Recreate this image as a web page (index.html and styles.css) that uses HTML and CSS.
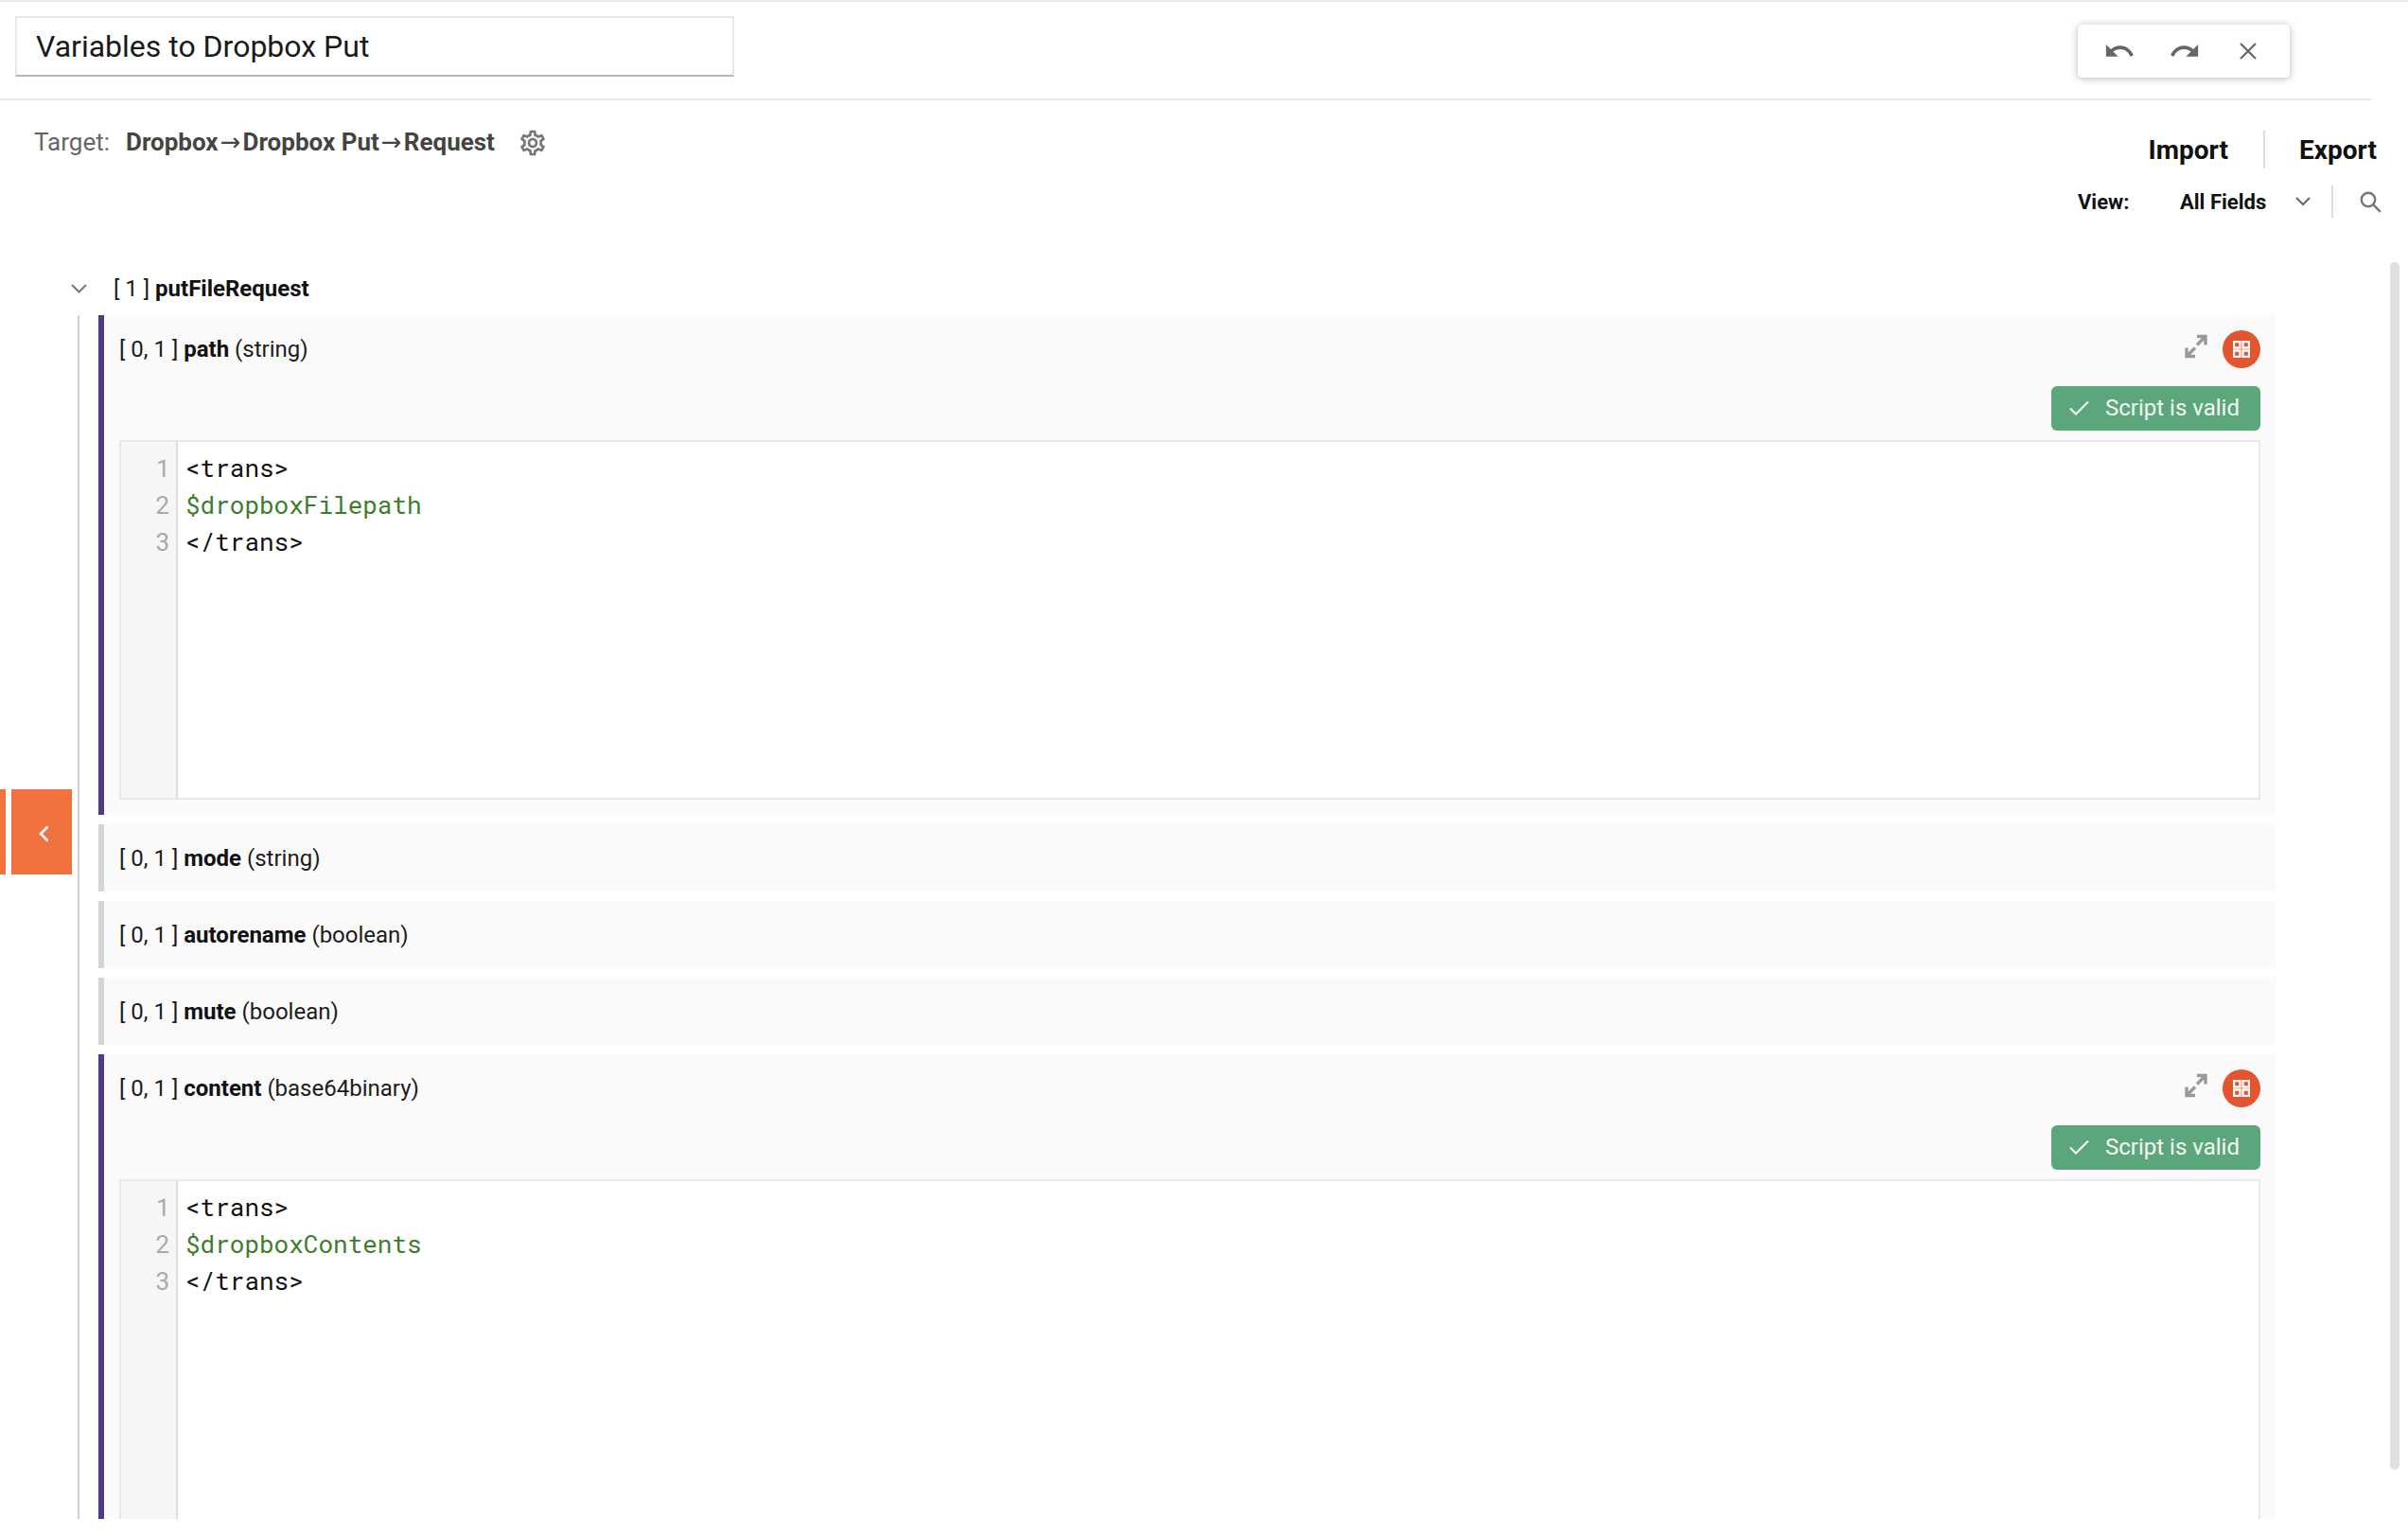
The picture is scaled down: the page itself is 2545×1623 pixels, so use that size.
FILE: index.html
```html
<!DOCTYPE html>
<html lang="en">
<head>
<meta charset="utf-8">
<title>Variables to Dropbox Put</title>
<link rel="stylesheet" href="styles.css">
</head>
<body>
<div class="page">
  <header class="header">
    <div class="title-box">Variables to Dropbox Put</div>
    <div class="history">
      <svg class="hist-icon" viewBox="0 0 24 24"><path d="M12.5 8c-2.65 0-5.05.99-6.9 2.6L2 7v9h9l-3.62-3.62c1.39-1.16 3.16-1.88 5.12-1.88 3.54 0 6.55 2.31 7.6 5.5l2.37-.78C21.08 11.03 17.15 8 12.5 8z"/></svg>
      <svg class="hist-icon redo" viewBox="0 0 24 24"><path d="M18.4 10.6C16.55 8.99 14.15 8 11.5 8c-4.65 0-8.58 3.03-9.96 7.22L3.9 16c1.05-3.19 4.05-5.5 7.6-5.5 1.95 0 3.73.72 5.12 1.88L13 16h9V7l-3.6 3.6z"/></svg>
      <svg class="close-icon" viewBox="0 0 18 18"><path d="M1 1l16 16M17 1L1 17"/></svg>
    </div>
  </header>

  <section class="subbar">
    <div class="target">
      <span class="target-label">Target:</span>
      <span class="target-path">Dropbox<span class="arrow">→</span>Dropbox Put<span class="arrow">→</span>Request</span>
      <svg class="gear" viewBox="0 0 24 24"><path d="M19.43 12.98c.04-.32.07-.64.07-.98 0-.34-.03-.66-.07-.98l2.11-1.65c.19-.15.24-.42.12-.64l-2-3.46c-.09-.16-.26-.25-.44-.25-.06 0-.12.01-.17.03l-2.49 1c-.52-.4-1.08-.73-1.69-.98l-.38-2.65C14.46 2.18 14.25 2 14 2h-4c-.25 0-.46.18-.49.42l-.38 2.65c-.61.25-1.17.59-1.69.98l-2.49-1c-.06-.02-.12-.03-.18-.03-.17 0-.34.09-.43.25l-2 3.46c-.13.22-.07.49.12.64l2.11 1.65c-.04.32-.07.65-.07.98 0 .33.03.66.07.98l-2.11 1.65c-.19.15-.24.42-.12.64l2 3.46c.09.16.26.25.44.25.06 0 .12-.01.17-.03l2.49-1c.52.4 1.08.73 1.69.98l.38 2.65c.03.24.24.42.49.42h4c.25 0 .46-.18.49-.42l.38-2.65c.61-.25 1.17-.59 1.69-.98l2.49 1c.06.02.12.03.18.03.17 0 .34-.09.43-.25l2-3.46c.12-.22.07-.49-.12-.64l-2.11-1.65zm-1.98-1.71c.04.31.05.52.05.73 0 .21-.02.43-.05.73l-.14 1.13.89.7 1.08.84-.7 1.21-1.27-.51-1.04-.42-.9.68c-.43.32-.84.56-1.25.73l-1.06.43-.16 1.13-.2 1.35h-1.4l-.19-1.35-.16-1.13-1.06-.43c-.43-.18-.83-.41-1.23-.71l-.91-.7-1.06.43-1.27.51-.7-1.21 1.08-.84.89-.7-.14-1.13c-.03-.31-.05-.54-.05-.74s.02-.43.05-.73l.14-1.13-.89-.7-1.08-.84.7-1.21 1.27.51 1.04.42.9-.68c.43-.32.84-.56 1.25-.73l1.06-.43.16-1.13.2-1.35h1.39l.19 1.35.16 1.13 1.06.43c.43.18.83.41 1.23.71l.91.7 1.06-.43 1.27-.51.7 1.21-1.07.85-.89.7.14 1.13zM12 8c-2.21 0-4 1.79-4 4s1.79 4 4 4 4-1.79 4-4-1.79-4-4-4zm0 6c-1.1 0-2-.9-2-2s.9-2 2-2 2 .9 2 2-.9 2-2 2z"/></svg>
    </div>
    <div class="actions">
      <div class="io">
        <span class="io-link">Import</span>
        <span class="io-sep"></span>
        <span class="io-link">Export</span>
      </div>
      <div class="view">
        <span class="view-label">View:</span>
        <span class="view-value">All Fields</span>
        <svg class="view-chevron" viewBox="0 0 16 10"><path d="M1 1l7 7 7-7"/></svg>
        <span class="view-sep"></span>
        <svg class="search" viewBox="0 0 23 23"><circle cx="9" cy="9" r="7.2"/><path d="M14.2 14.2l7.6 7.6"/></svg>
      </div>
    </div>
  </section>

  <main class="tree">
    <div class="root-row">
      <svg class="root-chevron" viewBox="0 0 17 10"><path d="M1 1l7.5 7.5L16 1"/></svg>
      <span class="label">[ 1 ] <b>putFileRequest</b></span>
    </div>
    <div class="fields">
      <article class="field active">
        <div class="field-head">
          <span class="label">[ 0, 1 ] <b>path</b> (string)</span>
          <div class="field-tools">
            <svg class="expand" viewBox="0 0 24 26"><path d="M13 2.5h9v9M22 2.5L13 11.5M11 23.5H2v-9M2 23.5l9-9"/></svg>
            <span class="grid-btn"><svg viewBox="0 0 18 18"><path d="M1 1h6.5v6.5H1zM10.500 1H17v6.500h-6.500zM1 10.500h6.500V17H1zM10.500 10.500H17V17h-6.500z"/></svg></span>
          </div>
        </div>
        <div class="status-row">
          <span class="valid"><svg viewBox="0 0 21 16"><path d="M1 8.500l6 6L20 1.500"/></svg>Script is valid</span>
        </div>
        <div class="editor">
          <div class="gutter"><span>1</span><span>2</span><span>3</span></div>
          <div class="code"><div>&lt;trans&gt;</div><div class="var">$dropboxFilepath</div><div>&lt;/trans&gt;</div></div>
        </div>
      </article>

      <article class="field collapsed"><span class="label">[ 0, 1 ] <b>mode</b> (string)</span></article>
      <article class="field collapsed"><span class="label">[ 0, 1 ] <b>autorename</b> (boolean)</span></article>
      <article class="field collapsed"><span class="label">[ 0, 1 ] <b>mute</b> (boolean)</span></article>

      <article class="field active">
        <div class="field-head">
          <span class="label">[ 0, 1 ] <b>content</b> (base64binary)</span>
          <div class="field-tools">
            <svg class="expand" viewBox="0 0 24 26"><path d="M13 2.5h9v9M22 2.5L13 11.5M11 23.5H2v-9M2 23.5l9-9"/></svg>
            <span class="grid-btn"><svg viewBox="0 0 18 18"><path d="M1 1h6.5v6.5H1zM10.500 1H17v6.500h-6.500zM1 10.500h6.500V17H1zM10.500 10.500H17V17h-6.500z"/></svg></span>
          </div>
        </div>
        <div class="status-row">
          <span class="valid"><svg viewBox="0 0 21 16"><path d="M1 8.500l6 6L20 1.500"/></svg>Script is valid</span>
        </div>
        <div class="editor">
          <div class="gutter"><span>1</span><span>2</span><span>3</span></div>
          <div class="code"><div>&lt;trans&gt;</div><div class="var">$dropboxContents</div><div>&lt;/trans&gt;</div></div>
        </div>
      </article>
    </div>
  </main>

  <div class="side-strip"></div>
  <button class="side-tab" type="button"><svg viewBox="0 0 11 18"><path d="M9.500 1.500L2 9l7.500 7.500"/></svg></button>
  <div class="scrollbar"></div>
</div>
</body>
</html>
```

FILE: styles.css
```css
* { box-sizing: border-box; }
html, body { margin: 0; padding: 0; background: #fff; }
body { font-family: Roboto, "Liberation Sans", sans-serif; color: #111; }
b { font-weight: 700; }

.page {
  position: relative;
  width: 2545px;
  height: 1623px;
  overflow: hidden;
  background: #fff;
  border-top: 2px solid #e8e8e8;
}

/* header */
.header {
  height: 104px;
  margin-right: 39px;
  padding: 15px 86px 0 16px;
  display: flex;
  justify-content: space-between;
  align-items: flex-start;
  border-bottom: 2px solid #e8e8e8;
}
.title-box {
  width: 760px;
  height: 64px;
  padding-left: 20px;
  border: 2px solid #e8e8e8;
  border-bottom-color: #b5b5b5;
  font-size: 32px;
  line-height: 60px;
  color: #1a1a1a;
}
.history {
  width: 224px;
  height: 56px;
  margin-top: 9px;
  padding-left: 27px;
  display: flex;
  align-items: center;
  background: #fff;
  border-radius: 5px;
  box-shadow: 0 1px 8px rgba(0, 0, 0, .28);
}
.hist-icon { width: 34px; height: 34px; fill: #666; }
.redo { margin-left: 35px; }
.close-icon { width: 18px; height: 18px; margin-left: 41px; fill: none; stroke: #666; stroke-width: 2.200; }

/* target + actions */
.subbar {
  height: 171px;
  padding: 22px 33px 0 36px;
  display: flex;
  justify-content: space-between;
  align-items: flex-start;
}
.target { display: flex; align-items: center; height: 44px; font-size: 26px; }
.target-label { color: #666; width: 97px; }
.target-path { color: #444; font-weight: 700; }
.arrow { display: inline-block; width: 26px; text-align: center; font-family: "DejaVu Sans", sans-serif; font-weight: 400; }
.gear { width: 32px; height: 32px; margin: 1px 0 0 24px; fill: #777; }
.actions { display: flex; flex-direction: column; align-items: flex-end; }
.io { display: flex; align-items: center; height: 40px; margin-top: 10px; font-size: 28px; font-weight: 700; color: #111; }
.io-sep { width: 2px; height: 40px; margin: 0 36px 0 37px; background: #ddd; }
.view { display: flex; align-items: center; height: 34px; margin-top: 18px; margin-right: -5px; font-size: 22px; font-weight: 700; color: #111; }
.view-label { width: 108px; }
.view-value { width: 122px; }
.view-chevron { width: 16px; height: 10px; fill: none; stroke: #666; stroke-width: 2; }
.view-sep { width: 2px; height: 34px; margin: 0 28px 0 22px; background: #ddd; }
.search { width: 23px; height: 23px; fill: none; stroke: #777; stroke-width: 2.400; }

/* tree */
.tree { height: 1328px; padding-left: 75px; overflow: hidden; }
.root-row { display: flex; align-items: center; height: 56px; gap: 28px; }
.root-chevron { width: 17px; height: 10px; fill: none; stroke: #777; stroke-width: 2; }
.label { font-size: 24px; color: #1c1c1c; white-space: nowrap; }
.label b { color: #111; }
.fields {
  margin-left: 7px;
  width: 2323px;
  padding-left: 20px;
  border-left: 2px solid #d0d0d0;
  display: flex;
  flex-direction: column;
  gap: 10px;
}
.field { background: #fafafa; border-left: 6px solid #d5d5d8; padding: 0 16px; flex: none; }
.field.active { border-left-color: #533a85; }
.field.collapsed { height: 71px; display: flex; align-items: center; }
.field-head { height: 72px; display: flex; align-items: center; justify-content: space-between; }
.field-tools { display: flex; align-items: center; gap: 16px; }
.expand { width: 24px; height: 26px; fill: none; stroke: #999; stroke-width: 3.400; margin-top: -6px; }
.grid-btn { width: 40px; height: 40px; border-radius: 50%; background: #e2552e; display: flex; align-items: center; justify-content: center; }
.grid-btn svg { width: 18px; height: 18px; fill: none; stroke: #fff; stroke-width: 2.300; }
.status-row { display: flex; justify-content: flex-end; height: 60px; padding-top: 3px; }
.valid {
  width: 221px;
  height: 47px;
  padding: 0 0 1px 19px;
  display: flex;
  align-items: center;
  gap: 17px;
  background: #5ba77b;
  border-radius: 6px;
  color: #f4faf6;
  font-size: 24px;
}
.valid svg { width: 21px; height: 16px; fill: none; stroke: #fff; stroke-width: 2; }
.editor { height: 380px; margin-bottom: 16px; display: flex; background: #fff; border: 2px solid #e8e8e8; }
.gutter {
  width: 60px;
  padding: 8px 6px 0 0;
  display: flex;
  flex-direction: column;
  align-items: flex-end;
  background: #f6f6f6;
  border-right: 2px solid #ddd;
  color: #aaa;
  font-family: "Roboto Mono", "Liberation Mono", monospace;
  font-size: 26px;
  line-height: 39px;
}
.code {
  padding: 8px 0 0 8px;
  font-family: "Roboto Mono", "Liberation Mono", monospace;
  font-size: 26px;
  line-height: 39px;
  color: #111;
}
.var { color: #3b7d2c; }

/* overlays */
.side-strip { position: absolute; left: 0; top: 832px; width: 6px; height: 90px; background: #f0723e; }
.side-tab {
  position: absolute;
  left: 12px;
  top: 832px;
  width: 64px;
  height: 90px;
  padding: 4px 0 0 4px;
  border: 0;
  background: #f0723e;
  display: flex;
  align-items: center;
  justify-content: center;
}
.side-tab svg { width: 11px; height: 18px; fill: none; stroke: #fff; stroke-width: 2.600; }
.scrollbar { position: absolute; left: 2526px; top: 275px; width: 10px; height: 1276px; border-radius: 5px; background: #e0e0e0; }
```
